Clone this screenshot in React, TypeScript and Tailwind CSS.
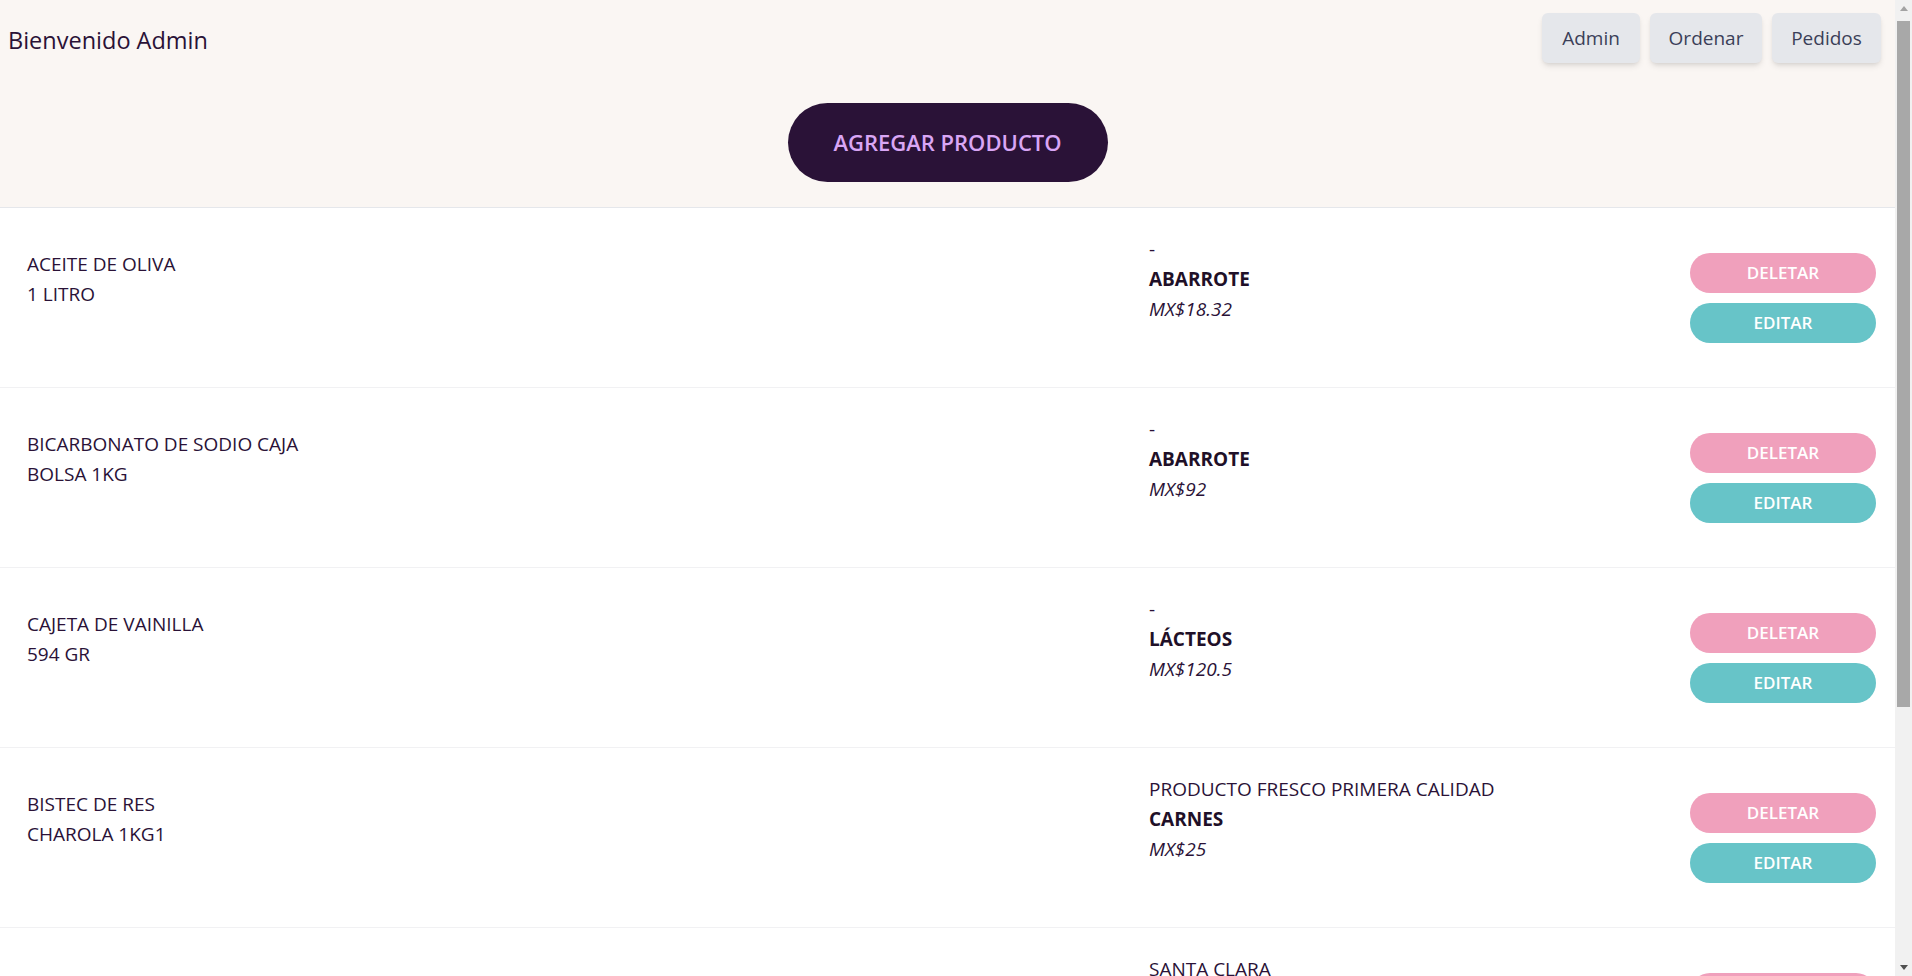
const products = [
  { name: 'ACEITE DE OLIVA', size: '1 LITRO', desc: '-', category: 'ABARROTE', price: 'MX$18.32' },
  { name: 'BICARBONATO DE SODIO CAJA', size: 'BOLSA 1KG', desc: '-', category: 'ABARROTE', price: 'MX$92' },
  { name: 'CAJETA DE VAINILLA', size: '594 GR', desc: '-', category: 'LÁCTEOS', price: 'MX$120.5' },
  { name: 'BISTEC DE RES', size: 'CHAROLA 1KG1', desc: 'PRODUCTO FRESCO PRIMERA CALIDAD', category: 'CARNES', price: 'MX$25' },
  { name: 'QUESO PANELA', size: '400 GR', desc: 'SANTA CLARA', category: 'LÁCTEOS', price: 'MX$64' },
  { name: 'FRIJOL NEGRO', size: 'BOLSA 1KG', desc: '-', category: 'ABARROTE', price: 'MX$38' },
]

function ProductRow({ p }: { p: (typeof products)[number] }) {
  return (
    <li className="grid grid-cols-[1122px_1fr_186px] items-center h-[180px] pl-[27px] pr-[19px] border-b border-[#f1f1f3]">
      <div className="pb-[38px] text-[19px] leading-[30px] text-[#2a1237]">
        <p>{p.name}</p>
        <p>{p.size}</p>
      </div>
      <div className="pb-[38px] text-[19px] leading-[30px] text-[#2a1237]">
        <p>{p.desc}</p>
        <p className="font-bold text-[#1f1028]">{p.category}</p>
        <p className="italic">{p.price}</p>
      </div>
      <div className="flex flex-col gap-[10px]">
        <button className="h-10 rounded-full bg-[#f0a0bc] text-white font-semibold text-[17px]">DELETAR</button>
        <button className="h-10 rounded-full bg-[#67c4c8] text-white font-semibold text-[17px]">EDITAR</button>
      </div>
    </li>
  )
}

// fake browser scrollbar (headless hides the real one)
function Scrollbar() {
  return (
    <div className="fixed top-0 right-0 h-screen w-[17px] bg-[#f1f1f1] flex flex-col items-center">
      <div className="h-[17px] w-full flex items-center justify-center">
        <svg width="8" height="5" viewBox="0 0 8 5"><path d="M0 5 L4 0 L8 5 Z" fill="#a3a3a3" /></svg>
      </div>
      <div className="h-[686px] w-[13px] mt-[4px] bg-[#a8a8a8]" />
      <div className="flex-1" />
      <div className="h-[17px] w-full flex items-center justify-center">
        <svg width="8" height="5" viewBox="0 0 8 5"><path d="M0 0 L4 5 L8 0 Z" fill="#505050" /></svg>
      </div>
    </div>
  )
}

export default function App() {
  return (
    <div className="min-h-screen bg-white font-['Open_Sans',sans-serif]">
      <div className="mr-[17px]">
        {/* ── HEADER ─────────────────────────────── */}
        <header className="bg-[#faf6f3] border-b border-[#e5e7eb] h-[208px] flex flex-col">
          <div className="flex items-center justify-between pl-2 pr-[14px] pt-[13px]">
            <h1 className="text-[23.5px] mt-[5px] text-[#2a1237]">Bienvenido Admin</h1>
            <nav className="flex gap-[10px]">
              <button className="h-[50px] w-[98px] rounded-md bg-[#e5e7eb] shadow-md text-[19px] text-[#3b3f58]">Admin</button>
              <button className="h-[50px] w-[112px] rounded-md bg-[#e5e7eb] shadow-md text-[19px] text-[#3b3f58]">Ordenar</button>
              <button className="h-[50px] w-[109px] rounded-md bg-[#e5e7eb] shadow-md text-[19px] text-[#3b3f58]">Pedidos</button>
            </nav>
          </div>
          <div className="flex justify-center mt-[40px]">
            <button className="h-[79px] w-[320px] rounded-full bg-[#2a1237] text-[#d9a6f5] text-[22px] font-semibold">
              AGREGAR PRODUCTO
            </button>
          </div>
        </header>

        {/* ── PRODUCT LIST ───────────────────────── */}
        <ul>
          {products.map((p) => (
            <ProductRow key={p.name} p={p} />
          ))}
        </ul>
      </div>
      <Scrollbar />
    </div>
  )
}
